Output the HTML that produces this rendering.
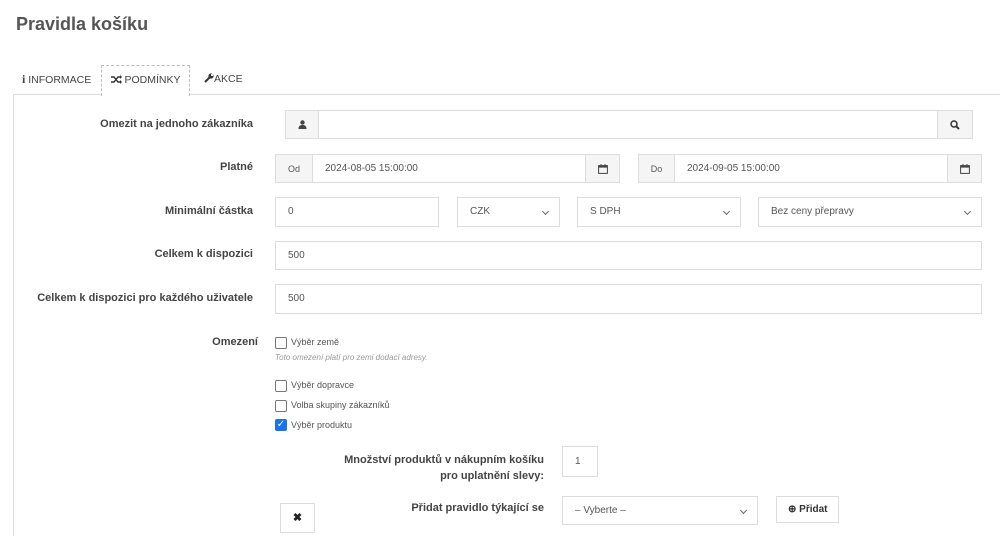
<!DOCTYPE html>
<html><head><meta charset="utf-8"><style>
*{box-sizing:border-box}
html,body{margin:0;width:1000px;height:536px;overflow:hidden}
body{background:#fff;font-family:"Liberation Sans",sans-serif;color:#333;position:relative}
.a{position:absolute}
h1{position:absolute;left:16px;top:14px;margin:0;font-size:18px;font-weight:bold;color:#555}
.tab{position:absolute;top:65px;height:30px;font-size:10.5px;line-height:29px;color:#444}
.panel{position:absolute;left:13px;top:94px;width:987px;height:442px;border-top:1px solid #ddd;border-left:1px solid #ddd}
.lbl{position:absolute;font-size:11px;font-weight:bold;color:#444;text-align:right;width:300px}
.box{position:absolute;border:1px solid #ddd;background:#fff;font-size:10px;color:#555;line-height:27px;padding-left:12px}
.ad{position:absolute;background:#f5f5f5;border:1px solid #ddd;font-size:9px;color:#555;text-align:center;line-height:27px}
.ad svg{vertical-align:middle}
.sel:after{content:"";position:absolute;right:11px;top:11px;width:4px;height:4px;border-right:1px solid #666;border-bottom:1px solid #666;transform:rotate(45deg)}
.cb{position:absolute;left:275px;width:12px;height:12px;border:1px solid #777;border-radius:2px;background:#fff}
.ct{position:absolute;left:291px;font-size:9px;color:#555}
</style></head><body>
<h1>Pravidla košíku</h1>
<div class="tab" style="left:22px"><b style="font-family:'Liberation Serif',serif;font-size:12px">i</b> INFORMACE</div>
<div class="tab" style="left:101px;width:89px;border:1px dashed #bbb;border-bottom:none;background:#fff;text-align:center;z-index:2;height:31px"><svg width="11" height="9" viewBox="0 0 11 9" style="vertical-align:-1px"><path d="M0 2h3l4 5h3M0 7h3l4-5h3" fill="none" stroke="#333" stroke-width="1.4"/><path d="M9 0l2 2-2 2zM9 5l2 2-2 2z" fill="#333"/></svg> PODMÍNKY</div>
<div class="tab" style="left:204px"><svg width="10" height="10" viewBox="0 0 10 10" style="vertical-align:-1px"><path d="M1 9l5-5" stroke="#333" stroke-width="2"/><circle cx="7" cy="3" r="2.6" fill="#333"/><circle cx="8" cy="2" r="1.1" fill="#fff"/></svg>AKCE</div>
<div class="panel"></div>

<div class="lbl" style="left:-47px;top:118px">Omezit na jednoho zákazníka</div>
<div class="ad" style="left:285px;top:110px;width:34px;height:29px"><svg width="9" height="9" viewBox="0 0 9 9"><circle cx="4.5" cy="2.5" r="2.2" fill="#444"/><path d="M0.5 9c0-3 1.5-4 4-4s4 1 4 4z" fill="#444"/></svg></div>
<div class="box" style="left:318px;top:110px;width:620px;height:29px"></div>
<div class="ad" style="left:937px;top:110px;width:36px;height:29px"><svg width="10" height="10" viewBox="0 0 10 10"><circle cx="4" cy="4" r="3" fill="none" stroke="#333" stroke-width="1.5"/><path d="M6.2 6.2L9 9" stroke="#333" stroke-width="2"/></svg></div>

<div class="lbl" style="left:-47px;top:161px">Platné</div>
<div class="ad" style="left:275px;top:154px;width:38px;height:29px;line-height:28px">Od</div>
<div class="box" style="left:312px;top:154px;width:274px;height:29px">2024-08-05 15:00:00</div>
<div class="ad" style="left:585px;top:154px;width:35px;height:29px"><svg width="10" height="10" viewBox="0 0 10 10"><rect x="0.6" y="1.6" width="8.8" height="7.8" fill="none" stroke="#444"/><rect x="0.6" y="1.6" width="8.8" height="2" fill="#444"/><path d="M3 0v2M7 0v2" stroke="#444"/></svg></div>
<div class="ad" style="left:638px;top:154px;width:37px;height:29px;line-height:28px">Do</div>
<div class="box" style="left:674px;top:154px;width:274px;height:29px">2024-09-05 15:00:00</div>
<div class="ad" style="left:947px;top:154px;width:35px;height:29px"><svg width="10" height="10" viewBox="0 0 10 10"><rect x="0.6" y="1.6" width="8.8" height="7.8" fill="none" stroke="#444"/><rect x="0.6" y="1.6" width="8.8" height="2" fill="#444"/><path d="M3 0v2M7 0v2" stroke="#444"/></svg></div>

<div class="lbl" style="left:-47px;top:205px">Minimální částka</div>
<div class="box" style="left:275px;top:197px;width:164px;height:30px;line-height:28px">0</div>
<div class="box sel" style="left:457px;top:197px;width:103px;height:30px;line-height:28px">CZK</div>
<div class="box sel" style="left:577px;top:197px;width:164px;height:30px;line-height:28px">S DPH</div>
<div class="box sel" style="left:758px;top:197px;width:224px;height:30px;line-height:28px">Bez ceny přepravy</div>

<div class="lbl" style="left:-47px;top:248px">Celkem k dispozici</div>
<div class="box" style="left:275px;top:241px;width:707px;height:29px">500</div>
<div class="lbl" style="left:-47px;top:292px">Celkem k dispozici pro každého uživatele</div>
<div class="box" style="left:275px;top:284px;width:707px;height:30px;line-height:28px">500</div>

<div class="lbl" style="left:-42px;top:336px">Omezení</div>
<div class="cb" style="top:337px"></div><div class="ct" style="top:337px">Výběr země</div>
<div class="a" style="left:275px;top:353px;font-size:8px;font-style:italic;color:#999">Toto omezení platí pro zemi dodací adresy.</div>
<div class="cb" style="top:380px"></div><div class="ct" style="top:380px">Výběr dopravce</div>
<div class="cb" style="top:400px"></div><div class="ct" style="top:400px">Volba skupiny zákazníků</div>
<div class="cb" style="top:419px;background:#1a73e8;border-color:#1a73e8;color:#fff;font-size:10px;line-height:10px;text-align:center">✓</div><div class="ct" style="top:420px">Výběr produktu</div>

<div class="lbl" style="left:244px;top:452px;line-height:16px">Množství produktů v nákupním košíku<br>pro uplatnění slevy:</div>
<div class="box" style="left:562px;top:446px;width:36px;height:31px;line-height:29px">1</div>
<div class="lbl" style="left:244px;top:502px">Přidat pravidlo týkající se</div>
<div class="box sel" style="left:562px;top:496px;width:196px;height:29px">– Vyberte –</div>
<div class="box" style="left:776px;top:496px;width:63px;height:27px;font-weight:bold;color:#333;padding-left:11px;line-height:25px">⊕ Přidat</div>
<div class="box" style="left:280px;top:503px;width:35px;height:30px;padding:0;text-align:center;font-weight:bold;color:#222;font-size:11px;line-height:29px">✖</div>
</body></html>
